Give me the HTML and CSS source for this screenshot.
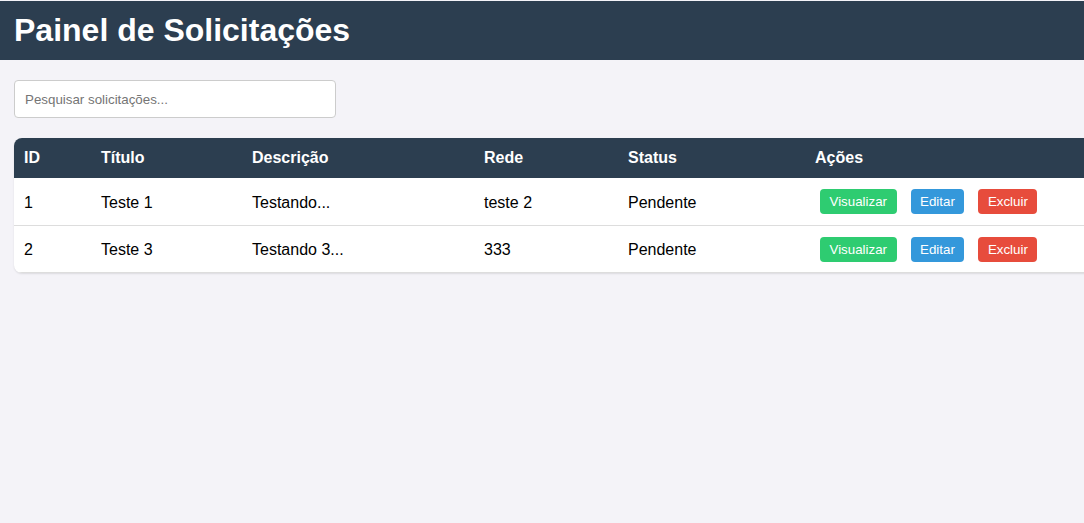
FILE: index.html
```html
<!DOCTYPE html>
<html lang="pt-BR">
<head>
<meta charset="utf-8">
<title>Painel de Solicitações</title>
<link rel="stylesheet" href="styles.css">
</head>
<body>
<header class="topbar">
  <h1 class="title">Painel de Solicitações</h1>
</header>
<main class="content">
  <input class="search" type="text" placeholder="Pesquisar solicitações...">
  <div class="table-wrap">
    <table class="grid">
      <colgroup>
        <col class="c-id"><col class="c-title"><col class="c-desc"><col class="c-net"><col class="c-status"><col class="c-actions">
      </colgroup>
      <thead>
        <tr><th>ID</th><th>Título</th><th>Descrição</th><th>Rede</th><th>Status</th><th>Ações</th></tr>
      </thead>
      <tbody>
        <tr>
          <td>1</td><td>Teste 1</td><td>Testando...</td><td>teste 2</td><td>Pendente</td>
          <td><div class="actions"><button class="btn btn-view">Visualizar</button><button class="btn btn-edit">Editar</button><button class="btn btn-del">Excluir</button></div></td>
        </tr>
        <tr>
          <td>2</td><td>Teste 3</td><td>Testando 3...</td><td>333</td><td>Pendente</td>
          <td><div class="actions"><button class="btn btn-view">Visualizar</button><button class="btn btn-edit">Editar</button><button class="btn btn-del">Excluir</button></div></td>
        </tr>
      </tbody>
    </table>
  </div>
</main>
</body>
</html>
```

FILE: styles.css
```css
html, body {
  margin: 0;
  padding: 0;
  overflow: hidden;
}
body {
  background: #f4f3f8;
  font-family: "Liberation Sans", Arial, sans-serif;
  color: #000;
  padding-top: 1px;
}
.topbar {
  background: #2c3e50;
  height: 59px;
  display: flex;
  align-items: center;
  padding: 0 14px;
}
.title {
  margin: 0;
  color: #fff;
  font-size: 32px;
  font-weight: bold;
}
.content {
  padding: 20px 14px;
}
.search {
  display: block;
  box-sizing: border-box;
  width: 322px;
  height: 38px;
  padding: 0 10px;
  border: 1px solid #ccc;
  border-radius: 4px;
  background: #fff;
  font-family: "Liberation Sans", Arial, sans-serif;
  font-size: 13.333px;
  margin-bottom: 20px;
}
.search::placeholder {
  color: #757575;
}
.table-wrap {
  width: 1120px;
  background: #fff;
  border-radius: 8px;
  overflow: hidden;
  box-shadow: 0 1px 2px rgba(0,0,0,0.1);
}
.grid {
  width: 100%;
  border-collapse: collapse;
  table-layout: fixed;
}
.c-id { width: 77px; }
.c-title { width: 151px; }
.c-desc { width: 232px; }
.c-net { width: 144px; }
.c-status { width: 187px; }
.grid th {
  background: #2c3e50;
  color: #fff;
  font-weight: bold;
  font-size: 16px;
  text-align: left;
  height: 40px;
  padding: 0 10px;
  box-sizing: border-box;
}
.grid td {
  font-size: 16px;
  height: 47px;
  padding: 3px 10px 0;
  border-bottom: 1px solid #ddd;
  box-sizing: border-box;
}
.actions {
  display: flex;
  gap: 14px;
  padding-left: 5px;
  margin-top: -2px;
}
.btn {
  border: none;
  border-radius: 4px;
  color: #fff;
  font-family: "Liberation Sans", Arial, sans-serif;
  font-size: 13.333px;
  height: 25px;
  padding: 0 9.5px;
  cursor: pointer;
}
.btn-view { background: #2ecc71; }
.btn-edit { background: #3498db; }
.btn-del { background: #e74c3c; }
```
